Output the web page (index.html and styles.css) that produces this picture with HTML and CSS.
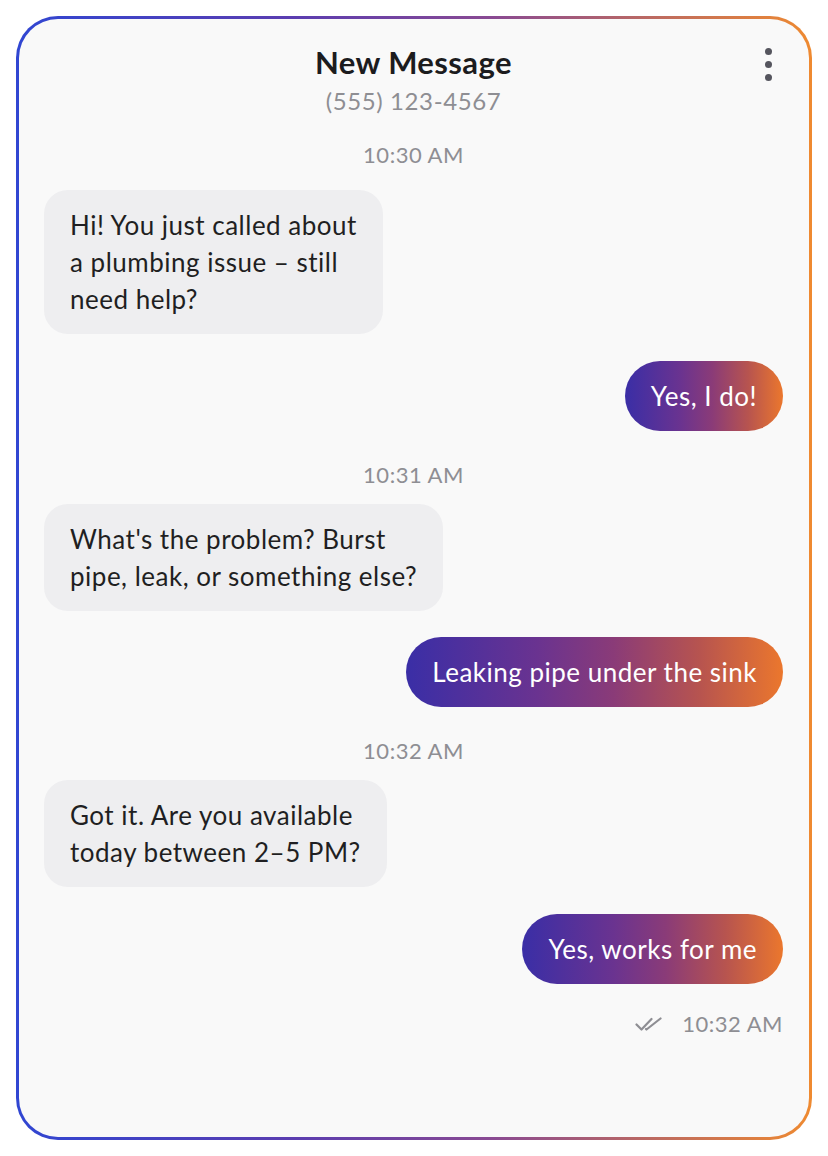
FILE: index.html
```html
<!DOCTYPE html>
<html lang="en">
<head>
    <meta charset="UTF-8">
    <meta name="viewport" content="width=device-width, initial-scale=1.0">
    <title>New Message</title>
    <link rel="stylesheet" href="styles.css">
</head>
<body>
    <div class="phone-card">
        <header class="chat-header">
            <h1>New Message</h1>
            <div class="number">(555) 123-4567</div>
            <button class="menu-btn" aria-label="More options">
                <span></span><span></span><span></span>
            </button>
        </header>

        <div class="chat">
            <div class="time first">10:30 AM</div>
            <div class="msg in">Hi! You just called about<br>a plumbing issue – still<br>need help?</div>
            <div class="msg out">Yes, I do!</div>

            <div class="time">10:31 AM</div>
            <div class="msg in">What's the problem? Burst<br>pipe, leak, or something else?</div>
            <div class="msg out">Leaking pipe under the sink</div>

            <div class="time">10:32 AM</div>
            <div class="msg in">Got it. Are you available<br>today between 2–5 PM?</div>
            <div class="msg out">Yes, works for me</div>

            <div class="receipt">
                <svg width="27" height="14" viewBox="0 0 27 14" fill="none" stroke="currentColor" stroke-width="2.2" stroke-linecap="round" stroke-linejoin="round">
                    <path d="M1.5 7.5 L6.5 12.5 L16.5 2"/>
                    <path d="M11 12 L11.5 12.5 L25.5 1.5"/>
                </svg>
                <span>10:32 AM</span>
            </div>
        </div>
    </div>
</body>
</html>
```

FILE: styles.css
```css
body {
    margin: 0;
    padding: 16px;
    background-color: #FFFFFF;
    font-family: 'Lato', 'Noto Sans', sans-serif;
    color: #1c1c1e;
}
.phone-card {
    width: 796px;
    height: 1124px;
    box-sizing: border-box;
    border: 3px solid transparent;
    border-radius: 42px;
    background:
        linear-gradient(#f9f9f9, #f9f9f9) padding-box,
        linear-gradient(90deg, #3046d2 0%, #5b3db0 35%, #8a4a92 60%, #ef8a30 100%) border-box;
    padding: 26px 26px 0 25px;
}
.chat-header {
    position: relative;
    text-align: center;
}
.chat-header h1 {
    margin: 0;
    font-size: 31px;
    line-height: 34px;
    font-weight: 700;
    letter-spacing: 0.4px;
    color: #1c1c1e;
}
.number {
    margin-top: 8px;
    font-size: 24px;
    line-height: 28px;
    letter-spacing: 0.6px;
    color: #8e8e93;
}
.menu-btn {
    position: absolute;
    top: 3px;
    right: 11px;
    display: flex;
    flex-direction: column;
    gap: 6px;
    padding: 0;
    border: none;
    background: none;
}
.menu-btn span {
    display: block;
    width: 7px;
    height: 7px;
    border-radius: 50%;
    background-color: #55555e;
}
.chat {
    display: flex;
    flex-direction: column;
}
.time {
    margin-top: 31px;
    margin-bottom: 16px;
    text-align: center;
    font-size: 22px;
    line-height: 26px;
    letter-spacing: 0.5px;
    color: #8e8e93;
}
.time.first {
    margin-top: 27px;
    margin-bottom: 22px;
}
.msg {
    font-size: 26px;
    line-height: 37px;
    letter-spacing: 0.5px;
    padding: 17px 26px 16px;
    white-space: nowrap;
}
.msg + .msg {
    margin-top: 26.5px;
}
.msg.in {
    align-self: flex-start;
    background-color: #eeeef0;
    color: #1f1f22;
    border-radius: 24px;
}
.msg.out {
    align-self: flex-end;
    color: #ffffff;
    border-radius: 35px;
    background: linear-gradient(90deg, #3a2ea6 0%, #6a3390 35%, #8a3b78 55%, #b7544f 78%, #eb772d 100%);
}
.receipt {
    align-self: flex-end;
    margin-top: 27px;
    display: flex;
    align-items: center;
    gap: 20px;
    font-size: 22px;
    line-height: 26px;
    letter-spacing: 0.5px;
    color: #8e8e93;
}
.receipt svg {
    display: block;
}
```
